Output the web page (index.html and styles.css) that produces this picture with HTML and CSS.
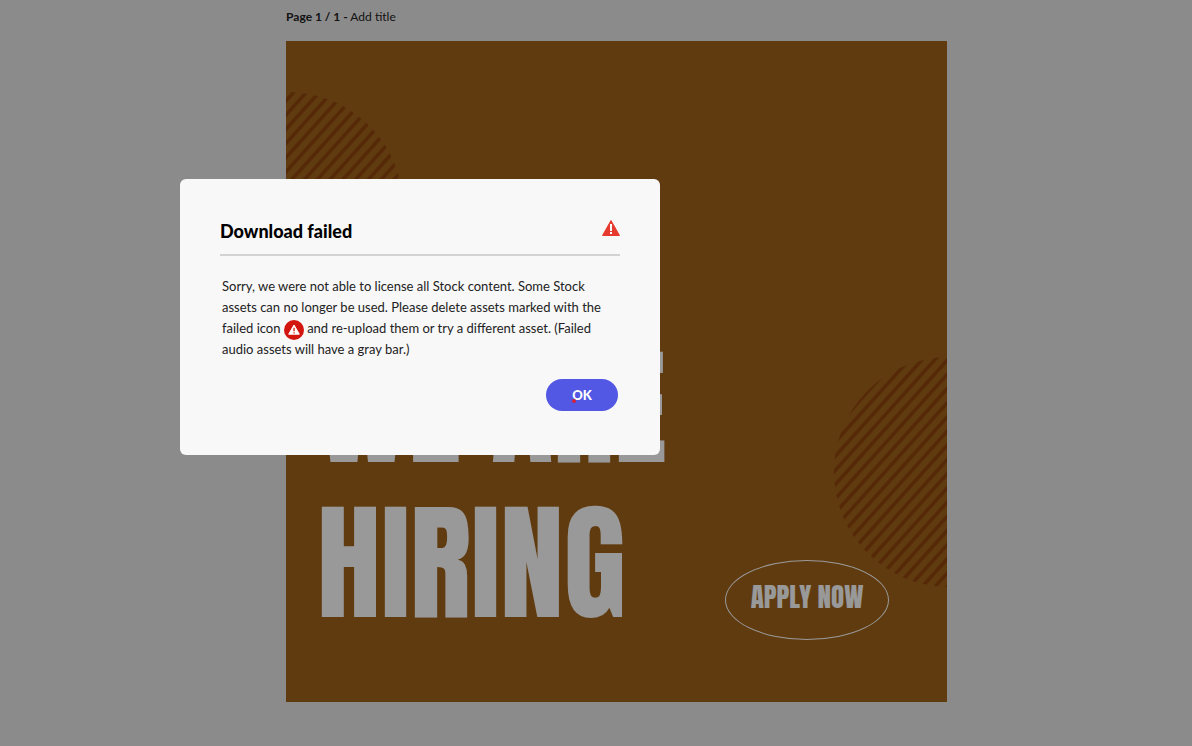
FILE: index.html
```
<!DOCTYPE html>
<html lang="en">
<head>
  <meta charset="UTF-8">
  <meta name="viewport" content="width=device-width, initial-scale=1.0">
  <title>Download failed</title>
  <link rel="stylesheet" href="styles.css">
</head>
<body>
  <main class="workspace">
    <p class="page-label"><strong>Page 1 / 1 -</strong> Add title</p>

    <section class="artboard">
      <svg class="shapes" viewBox="0 0 661 661" aria-hidden="true">
        <defs>
          <pattern id="stripes" width="19" height="19" patternUnits="userSpaceOnUse" patternTransform="rotate(-48)">
            <path d="M0 2h19M0 11.500h19" stroke="#8e430c" stroke-width="3.600"/>
          </pattern>
        </defs>
        <circle cx="2" cy="166" r="115" fill="url(#stripes)"/>
        <circle cx="663" cy="431" r="115" fill="url(#stripes)"/>
      </svg>
      <h1 class="headline">WE ARE<br>HIRING</h1>
      <a href="#" class="apply">APPLY NOW</a>
    </section>
  </main>

  <div class="overlay">
    <div class="dialog" role="alertdialog" aria-labelledby="dialogTitle" aria-describedby="dialogText">
      <header class="dialog-header">
        <h2 id="dialogTitle">Download failed</h2>
        <svg class="alert-icon" viewBox="0 0 18 16" aria-hidden="true">
          <path d="M9 0.5 17.5 15.5H0.5Z" fill="#e63a2e" stroke="#e63a2e" stroke-linejoin="round"/>
          <path d="M8 4h2v7H8zM8 12h2v2H8z" fill="#fff"/>
        </svg>
      </header>
      <p id="dialogText" class="dialog-text">
        Sorry, we were not able to license all Stock content. Some Stock assets can no longer be used. Please delete assets marked with the failed icon
        <svg class="failed-icon" viewBox="0 0 20 20" role="img" aria-label="failed">
          <circle cx="10" cy="10" r="10" fill="#d31510"/>
          <path d="M10 5 15.3 14.2H4.700Z" fill="#fff" stroke="#fff" stroke-linejoin="round"/>
          <path d="M9.400 7.700h1.300v3.500H9.400zM9.400 12.200h1.300v1.300H9.400z" fill="#d31510"/>
        </svg>
        and re-upload them or try a different asset. (Failed audio assets will have a gray bar.)
      </p>
      <footer class="dialog-actions">
        <button type="button" class="ok-button">OK</button>
      </footer>
    </div>
  </div>
</body>
</html>
```
FILE: styles.css
```
:root {
  --canvas: #e8e8e8;
  --art: #a0631b;
  --surface: #f8f8f8;
  --accent: #5258e4;
  --text: #222222;
}

* {
  margin: 0;
  padding: 0;
  box-sizing: border-box;
}

body {
  font-family: Lato, "Noto Sans", sans-serif;
  font-size: 13px;
  background: var(--canvas);
  color: var(--text);
  min-height: 100vh;
}

.workspace {
  width: 55.45%;
  margin-left: 24%;
  padding: 7px 0 44px;
}

.page-label {
  font-size: 12px;
  line-height: 20px;
  margin-bottom: 14px;
}

.artboard {
  position: relative;
  display: flex;
  align-items: flex-end;
  justify-content: space-between;
  aspect-ratio: 1;
  padding: 0 58px 62px 31px;
  background: var(--art);
  overflow: hidden;
}

/* striped circles bleeding off the artboard */
.shapes {
  position: absolute;
  inset: 0;
  width: 100%;
  height: 100%;
}

.headline {
  position: relative;
  font-family: Anton, Impact, "Roboto Condensed", sans-serif;
  font-size: 128px;
  font-weight: 400;
  line-height: 155px;
  color: #fff;
  white-space: nowrap;
}

.apply {
  position: relative;
  width: 164px;
  height: 80px;
  border: 1px solid #fff;
  border-radius: 50%;
  font-family: Anton, Impact, "Roboto Condensed", sans-serif;
  font-size: 27px;
  line-height: 72px;
  text-align: center;
  text-decoration: none;
  color: #fff;
}

.overlay {
  position: fixed;
  inset: 0;
  padding: 179px 180px;
  background: rgba(0, 0, 0, 0.4);
}

.dialog {
  max-width: 480px;
  padding: 40px 40px 44px;
  background: var(--surface);
  border-radius: 6px;
}

.dialog-header {
  display: flex;
  align-items: flex-start;
  justify-content: space-between;
  padding-bottom: 11px;
  border-bottom: 2px solid #d3d3d3;
}

.dialog-header h2 {
  font-size: 18px;
  font-weight: 900;
  line-height: 24px;
  color: #000;
}

.alert-icon {
  width: 18px;
  height: 16px;
  margin-top: 1px;
}

.dialog-text {
  padding: 20px 2px 19px;
  line-height: 21px;
}

.failed-icon {
  width: 20px;
  height: 20px;
  margin: -4px 0;
  vertical-align: middle;
}

.dialog-actions {
  display: flex;
  justify-content: flex-end;
  padding: 0 2px;
}

.ok-button {
  position: relative;
  width: 72px;
  height: 32px;
  border: none;
  border-radius: 16px;
  background: var(--accent);
  color: #fff;
  font: inherit;
  font-weight: 900;
  cursor: pointer;
}

/* click marker */
.ok-button::after {
  content: "";
  position: absolute;
  left: 26px;
  top: 20px;
  width: 4px;
  height: 4px;
  border-radius: 50%;
  background: #d0203a;
}

@media (max-width: 700px) {
  .overlay {
    padding: 40px 20px;
  }
}
```
